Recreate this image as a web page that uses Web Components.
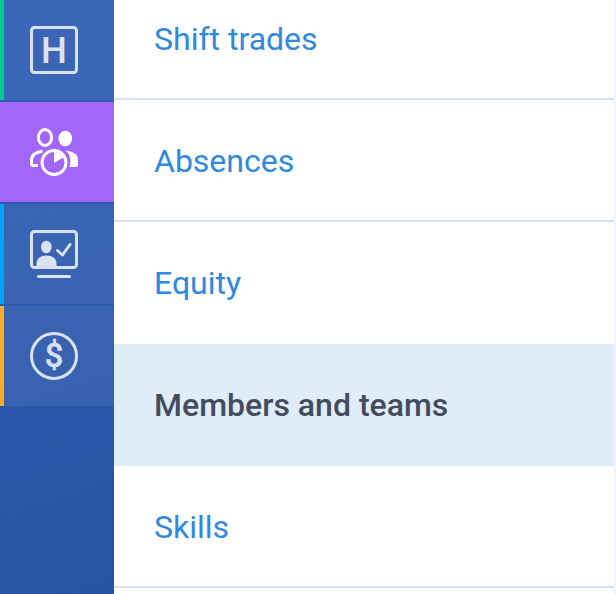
<!DOCTYPE html>
<html lang="en">
<head>
<meta charset="utf-8">
<title>Settings</title>
<style>
	body {
		margin: 0;
		height: 594px;
		overflow: hidden;
		background: #eff4fd;
		font-family: Roboto, "Liberation Sans", sans-serif;
	}
</style>
</head>
<body>

<template id="app-shell-template">
	<style>
		:host {
			display: flex;
			height: 594px;
			overflow: hidden;
		}
	</style>
	<slot></slot>
</template>

<template id="side-rail-template">
	<style>
		:host {
			display: flex;
			flex: none;
			flex-direction: column;
			gap: 2px;
			width: 114px;
			background: linear-gradient(160deg, #2e5cb4 0%, #2957a9 70%, #2853a2 100%);
		}
	</style>
	<slot></slot>
</template>

<template id="rail-item-template">
	<style>
		:host {
			display: flex;
			align-items: center;
			box-sizing: border-box;
			height: 100px;
			padding-left: 26px;
			border-left: 4px solid var(--accent);
			background: rgba(255, 255, 255, .07);
			color: #dae1f1;
		}

		:host([active]) {
			background: #a266fa;
			color: #fff;
		}

		::slotted(svg) {
			display: block;
			width: 48px;
			height: 48px;
		}
	</style>
	<slot></slot>
</template>

<template id="nav-list-template">
	<style>
		:host {
			display: block;
			width: 500px;
			height: 616px;
			/* the list is scrolled a little past its first row's top */
			margin-top: -22px;
			background: #fff;
		}
	</style>
	<slot></slot>
</template>

<template id="nav-row-template">
	<style>
		:host {
			display: flex;
			align-items: center;
			box-sizing: border-box;
			height: 122px;
			padding: 2px 40px 0;
			border-bottom: 2px solid #d9e2f4;
			color: #2e89e0;
			font-size: 32px;
			line-height: 40px;
			white-space: nowrap;
		}

		:host([before-selected]) {
			border-bottom-color: transparent;
		}

		:host([selected]) {
			border-bottom-color: #e0ecf8;
			background: #e0ecf8;
			color: #434c5e;
			font-weight: 500;
		}
	</style>
	<slot></slot>
</template>

<app-shell>
	<side-rail>
		<rail-item style="--accent: #00cc92">
			<svg viewBox="0 0 48 48" fill="none" stroke="currentColor" stroke-width="3">
				<rect x="1.5" y="1.5" width="45" height="45" rx="3"/>
				<text x="24" y="37" text-anchor="middle" font-size="36.5" font-weight="500" fill="currentColor" stroke="none">H</text>
			</svg>
		</rail-item>
		<rail-item active style="--accent: #a266fa">
			<svg viewBox="0 0 48 48" fill="none" stroke="currentColor" stroke-width="3">
				<ellipse cx="15" cy="9.5" rx="6.6" ry="8"/>
				<ellipse cx="35.3" cy="10.5" rx="6.8" ry="7.8" fill="currentColor" stroke="none"/>
				<path d="M12.5 23.200C6 24 1.5 27 1.5 32v4q0 1.500 1.500 1.500h5"/>
				<path d="M35.5 22.500C43 23.500 48 26.500 48 31v6q0 2-3 2h-5.500C41.500 32 40 26 35.500 22.500z" fill="currentColor" stroke="none"/>
				<circle cx="24" cy="34.500" r="12"/>
				<path d="M24 35V24a11 11 0 0 1 9.300 5.500z" fill="currentColor" stroke="none"/>
			</svg>
		</rail-item>
		<rail-item style="--accent: #00a2fa">
			<svg viewBox="0 0 48 48" fill="none" stroke="currentColor" stroke-width="3">
				<rect x="1.5" y="1.5" width="45" height="36" rx="3"/>
				<ellipse cx="16.300" cy="17" rx="5.300" ry="6.200" fill="currentColor" stroke="none"/>
				<path d="M6.500 38v-4.500c0-5 4-8 10-8s10 3 10 8V38z" fill="currentColor" stroke="none"/>
				<path d="M27.500 20.500l5 4.500 7.500-10.500" stroke-linecap="round" stroke-linejoin="round"/>
				<path d="M8.500 46.500h31" stroke-linecap="round"/>
			</svg>
		</rail-item>
		<rail-item style="--accent: #ffab25">
			<svg viewBox="0 0 48 48" fill="none" stroke="currentColor" stroke-width="3">
				<circle cx="24" cy="24" r="22.500"/>
				<text x="24" y="34.600" text-anchor="middle" font-size="32.500" font-weight="500" fill="currentColor" stroke="currentColor" stroke-width=".4">$</text>
			</svg>
		</rail-item>
	</side-rail>

	<nav-list>
		<nav-row>Shift trades</nav-row>
		<nav-row>Absences</nav-row>
		<nav-row before-selected>Equity</nav-row>
		<nav-row selected>Members and teams</nav-row>
		<nav-row>Skills</nav-row>
	</nav-list>
</app-shell>

<script>
	// Base class: stamps the template named after the element into its shadow root.
	class TemplateElement extends HTMLElement {
		constructor() {
			super();

			const template = document.querySelector('#' + this.localName + '-template');
			this.attachShadow({mode: 'open'}).appendChild(template.content.cloneNode(true));
		}
	}

	class AppShell extends TemplateElement {}
	class SideRail extends TemplateElement {}
	class RailItem extends TemplateElement {}

	class NavList extends TemplateElement {
		connectedCallback() {
			this.setAttribute('role', 'list');
		}
	}

	class NavRow extends TemplateElement {
		connectedCallback() {
			this.setAttribute('role', 'listitem');
		}
	}

	customElements.define('app-shell', AppShell);
	customElements.define('side-rail', SideRail);
	customElements.define('rail-item', RailItem);
	customElements.define('nav-list', NavList);
	customElements.define('nav-row', NavRow);
</script>
</body>
</html>
